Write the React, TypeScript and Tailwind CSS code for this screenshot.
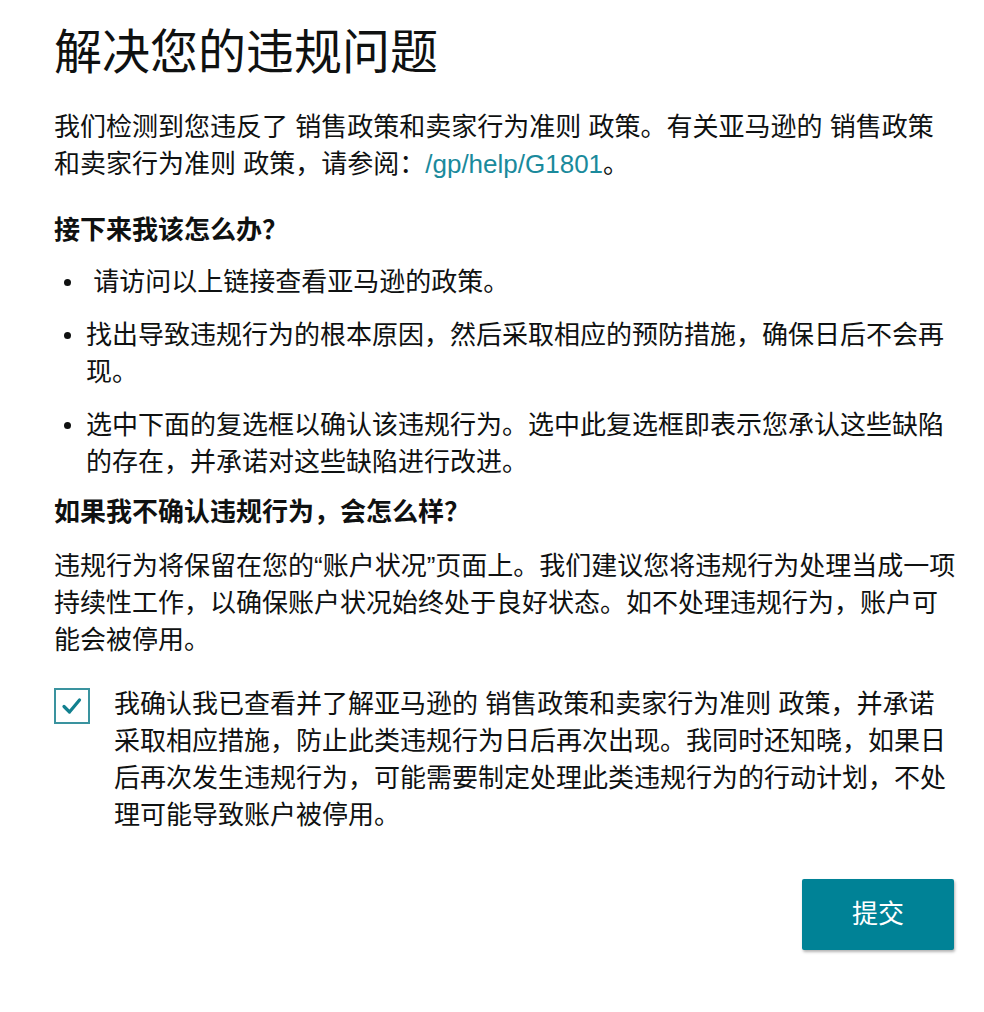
import { useState } from "react";

const bullets = [
  "\u00a0请访问以上链接查看亚马逊的政策。",
  "找出导致违规行为的根本原因，然后采取相应的预防措施，确保日后不会再现。",
  "选中下面的复选框以确认该违规行为。选中此复选框即表示您承认这些缺陷的存在，并承诺对这些缺陷进行改进。",
];

const App = () => {
  const [checked, setChecked] = useState(true);

  return (
    <div className="w-[984px] min-h-[1012px] bg-white pl-[54px] pr-[26px] pt-[24px] text-[#0f1111] font-['Liberation_Sans','Noto_Sans_CJK_SC',sans-serif]">
      <h1 className="text-[48px] leading-[58px] font-normal">解决您的违规问题</h1>

      <p className="mt-[27px] text-[26px] leading-[37px]">
        我们检测到您违反了 销售政策和卖家行为准则 政策。有关亚马逊的 销售政策和卖家行为准则 政策，请参阅：
        <a href="#" className="text-[#1a8a9c] hover:underline">/gp/help/G1801</a>。
      </p>

      <h2 className="mt-[29px] text-[26px] leading-[37px] font-bold">接下来我该怎么办？</h2>

      <ul className="mt-[15px] flex flex-col gap-[16px] text-[26px] leading-[37px]">
        {bullets.map((b) => (
          <li key={b} className="flex">
            <div className="w-[32px] h-[37px] shrink-0 flex items-center pl-[10px]">
              <div className="w-[7px] h-[7px] rounded-full bg-[#0f1111]" />
            </div>
            <p>{b}</p>
          </li>
        ))}
      </ul>

      <h2 className="mt-[13px] text-[26px] leading-[37px] font-bold">如果我不确认违规行为，会怎么样？</h2>

      <p className="mt-[17px] text-[26px] leading-[37px]">
        违规行为将保留在您的“账户状况”页面上。我们建议您将违规行为处理当成一项持续性工作，以确保账户状况始终处于良好状态。如不处理违规行为，账户可能会被停用。
      </p>

      <label className="mt-[27px] flex cursor-pointer">
        <button
          type="button"
          onClick={() => setChecked(!checked)}
          className="mt-[2px] w-[36px] h-[36px] shrink-0 border-2 border-[#3a939f] bg-white flex items-center justify-center"
        >
          {checked && (
            <svg width="24" height="24" viewBox="0 0 24 24" fill="none">
              <path d="M4 12.5l5.5 5.5L19.5 6" stroke="#12808f" strokeWidth="3.2" strokeLinecap="round" strokeLinejoin="round" />
            </svg>
          )}
        </button>
        <p className="ml-[24px] text-[26px] leading-[37px]">
          我确认我已查看并了解亚马逊的 销售政策和卖家行为准则 政策，并承诺采取相应措施，防止此类违规行为日后再次出现。我同时还知晓，如果日后再次发生违规行为，可能需要制定处理此类违规行为的行动计划，不处理可能导致账户被停用。
        </p>
      </label>

      <div className="mt-[45px] flex justify-end pr-[4px]">
        <button className="w-[152px] h-[71px] rounded-[2px] bg-[#008296] text-white text-[26px] shadow-[1px_2px_3px_rgba(0,0,0,0.3)] hover:bg-[#006f80]">
          提交
        </button>
      </div>
    </div>
  );
};

export default App;
